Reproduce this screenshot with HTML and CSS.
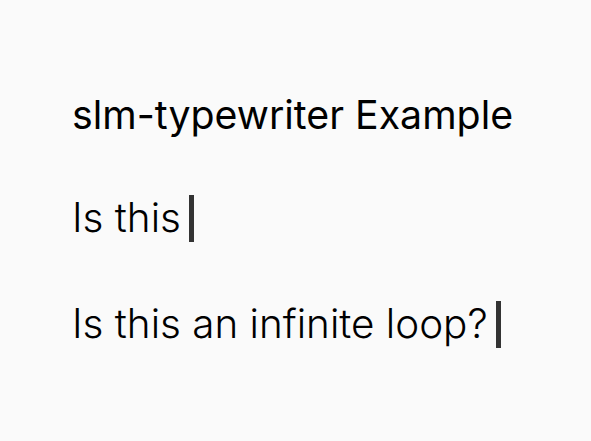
FILE: index.html
```html
<!DOCTYPE html>
<html>
<head>
<meta charset="utf-8">
<link rel="stylesheet" href="styles.css">
</head>
<body>
<main class="page">
  <h1 class="title">slm-typewriter Example</h1>
  <p class="line">Is this<span class="cursor"></span></p>
  <p class="line">Is this an infinite loop?<span class="cursor"></span></p>
</main>
</body>
</html>
```
FILE: styles.css
```css
html, body {
  margin: 0;
  background: #fafafa;
}
.page {
  padding: 91px 72px;
  font-family: Inter, "Noto Sans", sans-serif;
  color: #000;
}
.title {
  margin: 0;
  font-size: 39.3px;
  font-weight: 400;
  line-height: 48px;
}
.line {
  margin: 58px 0 0;
  font-size: 40.4px;
  font-weight: 300;
  line-height: 48px;
  display: flex;
  align-items: center;
}
.title + .line {
  margin-top: 55px;
}
.cursor {
  display: inline-block;
  width: 5px;
  height: 47px;
  background: #333;
  margin-left: 8px;
}
```
